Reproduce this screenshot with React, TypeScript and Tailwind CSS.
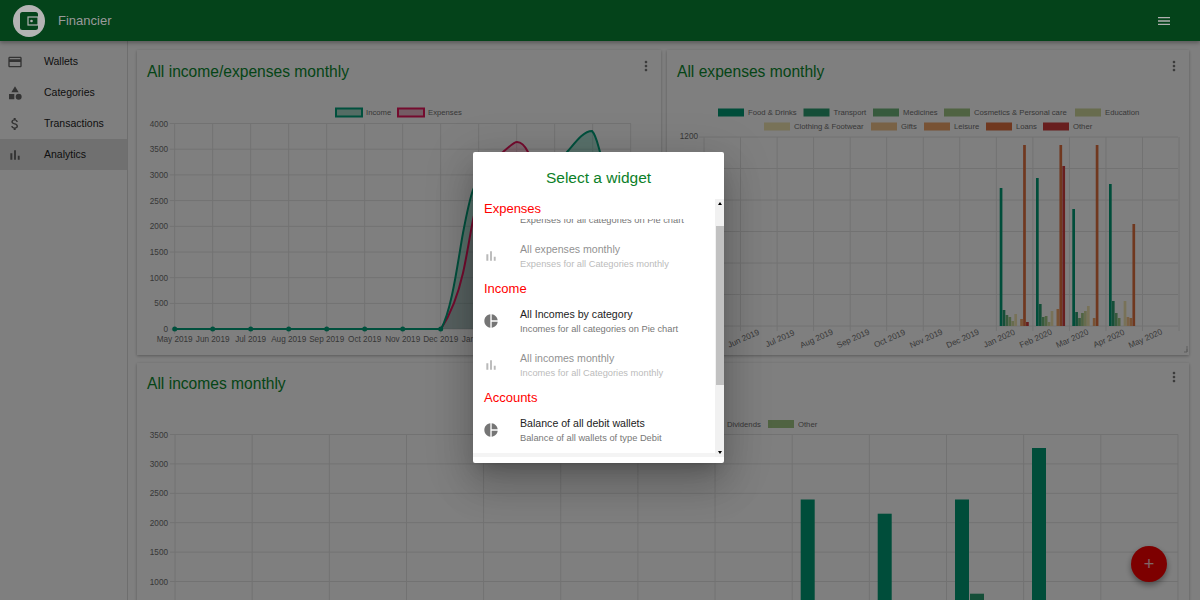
import { ReactNode } from "react";

const FONT = "font-['Liberation_Sans',Arial,sans-serif]";
const MONTHS = ["May 2019", "Jun 2019", "Jul 2019", "Aug 2019", "Sep 2019", "Oct 2019", "Nov 2019", "Dec 2019", "Jan 2020", "Feb 2020", "Mar 2020", "Apr 2020", "May 2020"];
const PALETTE = ["#009a74", "#2a9d70", "#6fb57a", "#a0c684", "#d0d89c", "#f0e4b0", "#f2c48c", "#f0a468", "#e0703f", "#d03c3c"];
const GRID = "#e4e4e4";
const LABEL = "#707070";

const ICONS = {
  card: "M20 4H4c-1.11 0-1.99.89-1.99 2L2 18c0 1.11.89 2 2 2h16c1.11 0 2-.89 2-2V6c0-1.11-.89-2-2-2zm0 14H4v-6h16v6zm0-10H4V6h16v2z",
  category: "M12 2l-5.5 9h11zM17.5 13a4.5 4.5 0 1 0 0 9 4.5 4.5 0 0 0 0-9zM3 13.5h8v8H3z",
  money: "M11.8 10.9c-2.27-.59-3-1.2-3-2.15 0-1.09 1.01-1.85 2.7-1.85 1.78 0 2.44.85 2.5 2.1h2.21c-.07-1.72-1.12-3.3-3.21-3.81V3h-3v2.16c-1.94.42-3.5 1.68-3.5 3.61 0 2.31 1.91 3.46 4.7 4.13 2.5.6 3 1.48 3 2.41 0 .69-.49 1.79-2.7 1.79-2.06 0-2.87-.92-2.98-2.1h-2.2c.12 2.19 1.76 3.42 3.68 3.83V21h3v-2.15c1.95-.37 3.5-1.5 3.5-3.55 0-2.84-2.43-3.81-4.7-4.4z",
  bars: "M5 9.2h3V19H5zM10.6 5h2.8v14h-2.8zm5.6 8H19v6h-2.8z",
  pie: "M11 2v20c-5.07-.5-9-4.79-9-10s3.93-9.5 9-10zm2.03 0v8.99H22c-.47-4.74-4.24-8.52-8.97-8.99zm0 11.01V22c4.74-.47 8.5-4.25 8.97-8.99h-8.97z",
  more: "M12 8c1.1 0 2-.9 2-2s-.9-2-2-2-2 .9-2 2 .9 2 2 2zm0 2c-1.1 0-2 .9-2 2s.9 2 2 2 2-.9 2-2-.9-2-2-2zm0 6c-1.1 0-2 .9-2 2s.9 2 2 2 2-.9 2-2-.9-2-2-2z",
  menu: "M3 18h18v-2H3v2zm0-5h18v-2H3v2zm0-7v2h18V6H3z",
};

const Icon = ({ d, className }: { d: string; className?: string }) => (
  <svg viewBox="0 0 24 24" className={className} fill="currentColor">
    <path d={d} />
  </svg>
);

const Label = ({ x, y, anchor = "middle", children, rotate, size = 8.2 }: { x: number; y: number; anchor?: "middle" | "end" | "start"; children: ReactNode; rotate?: number; size?: number }) => (
  <text x={x} y={y} textAnchor={anchor} fontSize={size} fill={LABEL} transform={rotate ? `rotate(${rotate} ${x} ${y})` : undefined}>
    {children}
  </text>
);

const Grid = ({ xs, ys, x0, x1, y0, y1 }: { xs: number[]; ys: number[]; x0: number; x1: number; y0: number; y1: number }) => (
  <g stroke={GRID} strokeWidth="1">
    {xs.map((x) => (
      <line key={x} x1={x} x2={x} y1={y0} y2={y1 + 5} />
    ))}
    {ys.map((y) => (
      <line key={y} x1={x0 - 5} x2={x1} y1={y} y2={y} />
    ))}
  </g>
);

const Swatch = ({ x, y, color, label, w = 26 }: { x: number; y: number; color: string; label: string; w?: number }) => (
  <g>
    <rect x={x} y={y} width={w} height={8} fill={color} />
    <Label x={x + w + 4} y={y + 6.5} anchor="start" size={7.7}>
      {label}
    </Label>
  </g>
);

const Card = ({ title, height, lifted, children }: { title: string; height: string; lifted?: boolean; children: ReactNode }) => (
  <section className={`relative bg-white shadow-[0_1px_3px_rgba(0,0,0,0.3)] ${height}`}>
    <div className="flex items-start justify-between pl-[10px] pr-[7px]">
      <h2 className={`text-[15.6px] leading-[18px] text-[#0a8a2e] ${lifted ? "pt-[12px]" : "pt-[13px]"}`}>{title}</h2>
      <Icon d={ICONS.more} className={`h-4 w-4 text-[#777] ${lifted ? "mt-[6px]" : "mt-[8px]"}`} />
    </div>
    {children}
  </section>
);

const IncomeExpensesChart = () => {
  const xs = Array.from({ length: 13 }, (_, i) => 174.7 + i * 38);
  const ys = Array.from({ length: 9 }, (_, i) => 123.5 + i * 25.7);
  const income = "M441 329C452 310 458 260 463 233C467 212 470 198 473 190C480 170 500 175 530 190C545 195 555 175 567 152C575 143 583 131 592 131C596 135 598 145 600 152C610 200 622 290 631 329";
  const expense = "M441 329C450 315 458 295 463 273C467 255 470 235 473 220C480 185 490 160 503 152C510 146 514 142 517 142C521 142 525 146 528 152C540 190 560 260 593 300C610 320 620 329 631 329";
  return (
    <svg viewBox="137 100 524 255" className="absolute left-0 top-[50px] h-[255px] w-[524px]">
      <Grid xs={xs} ys={ys} x0={174.7} x1={631} y0={123.5} y1={329} />
      {["4000", "3500", "3000", "2500", "2000", "1500", "1000", "500", "0"].map((v, i) => (
        <Label key={v} x={168} y={ys[i] + 3} anchor="end">
          {v}
        </Label>
      ))}
      {MONTHS.map((m, i) => (
        <Label key={m} x={xs[i]} y={342}>
          {m}
        </Label>
      ))}
      <rect x="336" y="108.5" width="26" height="8" fill="#a8d8c8" stroke="#00a07a" strokeWidth="2" />
      <Label x={366} y={115} anchor="start" size={7.7}>Income</Label>
      <rect x="398" y="108.5" width="26" height="8" fill="#e8b8c8" stroke="#e8175d" strokeWidth="2" />
      <Label x={428} y={115} anchor="start" size={7.7}>Expenses</Label>
      <path d={`${expense}Z`} fill="#e8175d" fillOpacity="0.2" />
      <path d={`${income}Z`} fill="#00a07a" fillOpacity="0.3" />
      <path d={expense} fill="none" stroke="#e8175d" strokeWidth="2" />
      <path d={income} fill="none" stroke="#00a07a" strokeWidth="2" />
      <line x1="174.7" x2="441" y1="329" y2="329" stroke="#00a07a" strokeWidth="2" />
      {xs.slice(0, 8).map((x) => (
        <circle key={x} cx={x} cy={329} r="2.5" fill="#00a07a" />
      ))}
    </svg>
  );
};

// tops of each bar per month, 0 = no bar
const EXPENSE_BARS = [
  { x: 999.7, tops: [188, 310, 315, 317, 321, 314, 0, 319, 145, 322] },
  { x: 1036, tops: [178, 304, 317, 316, 322, 311, 0, 309, 145, 166] },
  { x: 1072.3, tops: [209, 312, 318, 313, 311, 306, 0, 318, 145, 0] },
  { x: 1109, tops: [184, 301, 313, 318, 0, 301, 317, 318, 224, 0] },
];

const ExpensesChart = () => {
  const xs = Array.from({ length: 14 }, (_, i) => 704 + i * 36.54);
  const ys = Array.from({ length: 7 }, (_, i) => 137 + i * 31.5);
  const legend = [
    { x: 718, y: 108.5, label: "Food & Drinks" },
    { x: 803.5, y: 108.5, label: "Transport" },
    { x: 873, y: 108.5, label: "Medicines" },
    { x: 944, y: 108.5, label: "Cosmetics & Personal care" },
    { x: 1075, y: 108.5, label: "Education" },
    { x: 764, y: 122.5, label: "Clothing & Footwear" },
    { x: 871, y: 122.5, label: "Gifts" },
    { x: 924, y: 122.5, label: "Leisure" },
    { x: 986, y: 122.5, label: "Loans" },
    { x: 1043, y: 122.5, label: "Other" },
  ];
  return (
    <svg viewBox="667 100 522 255" className="absolute left-0 top-[50px] h-[255px] w-[522px]">
      <Grid xs={xs} ys={ys} x0={704} x1={1178} y0={137} y1={326} />
      {legend.map((l, i) => (
        <Swatch key={l.label} x={l.x} y={l.y} color={PALETTE[i]} label={l.label} />
      ))}
      <Label x={698} y={139} anchor="end">1200</Label>
      {EXPENSE_BARS.map((group) =>
        group.tops.map((top, i) =>
          top ? <rect key={`${group.x}-${i}`} x={group.x + i * 2.93} y={top} width={2.7} height={326 - top} fill={PALETTE[i]} /> : null,
        ),
      )}
      {MONTHS.map((m, i) => (
        <Label key={m} x={xs[i] + 4} y={341} rotate={-24}>
          {m}
        </Label>
      ))}
      <path d="M1187 349v3h-3M1187 346v6" stroke="#bbb" fill="none" />
    </svg>
  );
};

const IncomesChart = () => {
  const xs = Array.from({ length: 14 }, (_, i) => 175 + i * 77.15);
  const ys = Array.from({ length: 7 }, (_, i) => 434.5 + i * 29.4);
  return (
    <svg viewBox="137 413 1052 187" className="absolute left-0 top-[50px] h-[187px] w-[1052px]">
      <Grid xs={xs} ys={ys} x0={175} x1={1178} y0={434.5} y1={640} />
      {["3500", "3000", "2500", "2000", "1500", "1000"].map((v, i) => (
        <Label key={v} x={168} y={ys[i] + 3} anchor="end">
          {v}
        </Label>
      ))}
      <Label x={727} y={426.5} anchor="start" size={7.7}>Dividends</Label>
      <Swatch x={768} y={420} color="#a0c684" label="Other" />
      <rect x="800.7" y="499.5" width="14" height="110" fill="#009a74" />
      <rect x="877.7" y="513.7" width="14" height="96" fill="#009a74" />
      <rect x="955" y="499.5" width="14" height="110" fill="#009a74" />
      <rect x="970" y="593.7" width="14" height="16" fill="#2a9d70" />
      <rect x="1032" y="448" width="14" height="160" fill="#009a74" />
    </svg>
  );
};

const NAV = [
  { label: "Wallets", icon: ICONS.card },
  { label: "Categories", icon: ICONS.category },
  { label: "Transactions", icon: ICONS.money },
  { label: "Analytics", icon: ICONS.bars, active: true },
];

const WidgetRow = ({ icon, title, sub, disabled }: { icon: string; title?: string; sub: string; disabled?: boolean }) => (
  <li className={`flex h-[44px] items-center pl-[10px] ${disabled ? "opacity-50" : ""}`}>
    <Icon d={icon} className="h-4 w-4 text-[#757575]" />
    <div className="ml-[21px]">
      <div className="min-h-[15px] text-[10.6px] leading-[15px] text-[#222]">{title}</div>
      <div className="text-[9.3px] leading-[14px] text-[#777]">{sub}</div>
    </div>
  </li>
);

const GroupHeader = ({ children }: { children: ReactNode }) => (
  <li className="flex h-[21px] items-center pl-[11px] text-[13px] text-[#ff0000]">{children}</li>
);

const WidgetDialog = () => (
  <div className="absolute inset-0 z-20 flex justify-center bg-black/50 pr-[3px] pt-[152px]">
    <div className="h-[310.5px] w-[251px] rounded-[2px] bg-white shadow-[0_11px_15px_-7px_rgba(0,0,0,0.2),0_24px_38px_3px_rgba(0,0,0,0.14),0_9px_46px_8px_rgba(0,0,0,0.12)]">
      <h3 className="flex h-[47px] items-center justify-center pt-[5px] text-[15.5px] text-[#0c8028]">Select a widget</h3>
      <div className="flex h-[258px]">
        <div className="flex w-[242px] flex-col">
          <div className="relative h-[254px] overflow-hidden">
            <div className="absolute left-0 top-0 z-10 flex h-[19.5px] w-full items-center bg-white pl-[11px] text-[13px] text-[#ff0000]">
              Expenses
            </div>
            <ul className="mt-[-9px]">
              <WidgetRow icon={ICONS.pie} sub="Expenses for all categories on Pie chart" />
              <WidgetRow icon={ICONS.bars} title="All expenses monthly" sub="Expenses for all Categories monthly" disabled />
              <GroupHeader>Income</GroupHeader>
              <WidgetRow icon={ICONS.pie} title="All Incomes by category" sub="Incomes for all categories on Pie chart" />
              <WidgetRow icon={ICONS.bars} title="All incomes monthly" sub="Incomes for all Categories monthly" disabled />
              <GroupHeader>Accounts</GroupHeader>
              <WidgetRow icon={ICONS.pie} title="Balance of all debit wallets" sub="Balance of all wallets of type Debit" />
            </ul>
          </div>
          <div className="h-[4px] bg-[#f4f4f4]" />
        </div>
        <div className="flex w-[9px] flex-col bg-[#f1f1f1]">
          <div className="flex h-[27px] items-start justify-center pt-[3px]">
            <div className="h-0 w-0 border-x-[2.5px] border-b-[3px] border-x-transparent border-b-black" />
          </div>
          <div className="mx-auto h-[159px] w-[8px] bg-[#c1c1c1]" />
          <div className="flex flex-1 items-end justify-center pb-[3px]">
            <div className="h-0 w-0 border-x-[2.5px] border-t-[3px] border-x-transparent border-t-black" />
          </div>
        </div>
      </div>
    </div>
  </div>
);

export default function App() {
  return (
    <div className={`relative flex h-[600px] w-[1200px] flex-col overflow-hidden bg-white ${FONT}`}>
      <header className="relative z-30 flex h-[41px] items-center justify-between bg-[#04431a] pl-[13px] pr-[28px] shadow-[0_2px_4px_rgba(0,0,0,0.3)]">
        <div className="flex items-center">
          <div className="flex h-[32px] w-[32px] items-center justify-center rounded-full bg-[#b4b4b4]">
            <svg viewBox="0 0 24 24" className="h-[24px] w-[24px]">
              <rect x="3" y="3" width="18" height="18" rx="2.5" fill="#04431a" />
              <rect x="11" y="8" width="10" height="8" fill="#04431a" stroke="#b4b4b4" strokeWidth="1.2" />
              <circle cx="14.5" cy="12" r="1.3" fill="#b4b4b4" />
            </svg>
          </div>
          <span className="ml-[13px] text-[13px] text-[#9a9a9a]">Financier</span>
        </div>
        <Icon d={ICONS.menu} className="h-4 w-4 text-[#b0b0b0]" />
      </header>
      <div className="flex min-h-0 flex-1">
        <nav className="w-[128px] shrink-0 border-r border-[#ddd] pt-[5px]">
          {NAV.map((item) => (
            <div key={item.label} className={`flex h-[31px] items-center pl-[7px] ${item.active ? "bg-[#e0e0e0]" : ""}`}>
              <Icon d={item.icon} className="h-4 w-4 text-[#666]" />
              <span className="ml-[21px] text-[10.5px] text-[#222]">{item.label}</span>
            </div>
          ))}
        </nav>
        <main className="grid flex-1 grid-cols-[524px_522px] content-start gap-x-[6px] gap-y-[8px] pl-[9px] pt-[9px]">
          <Card title="All income/expenses monthly" height="h-[305px]">
            <IncomeExpensesChart />
          </Card>
          <Card title="All expenses monthly" height="h-[305px]">
            <ExpensesChart />
          </Card>
          <div className="col-span-2">
            <Card title="All incomes monthly" height="h-[300px]" lifted>
              <IncomesChart />
            </Card>
          </div>
        </main>
      </div>
      <button className="absolute bottom-[18px] right-[33px] flex h-[36px] w-[36px] items-center justify-center rounded-full bg-[#fb0000] text-[18px] font-light text-white/80 shadow-[0_3px_6px_rgba(0,0,0,0.4)]">
        +
      </button>
      <WidgetDialog />
    </div>
  );
}
